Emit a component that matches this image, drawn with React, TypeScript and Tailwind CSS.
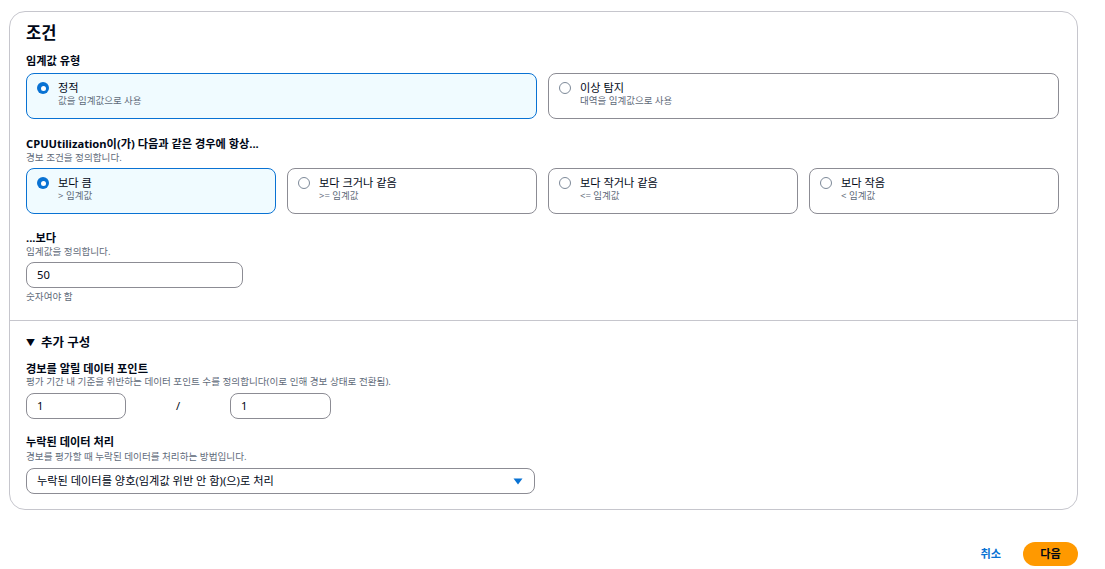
import React from 'react';

const FONT = "font-['Noto_Sans','Noto_Sans_CJK_KR',sans-serif]";

type Opt = { title: string; sub: string };

const Radio: React.FC<{ on: boolean }> = ({ on }) =>
  on ? (
    <span className="mt-[1px] flex h-[12px] w-[12px] shrink-0 items-center justify-center rounded-full bg-[#0972d3]">
      <span className="h-[5px] w-[5px] rounded-full bg-white" />
    </span>
  ) : (
    <span className="mt-[1px] h-[12px] w-[12px] shrink-0 rounded-full border-[1.5px] border-[#7d8998] bg-white" />
  );

const Tile: React.FC<Opt & { on: boolean }> = ({ title, sub, on }) => (
  <div
    className={
      on
        ? 'flex h-[46px] gap-[9px] rounded-lg border border-[#0972d3] bg-[#f0fbff] px-[10px] pt-[7px]'
        : 'flex h-[46px] gap-[9px] rounded-lg border border-[#8c8c94] bg-white px-[10px] pt-[7px]'
    }
  >
    <Radio on={on} />
    <div className="flex flex-col">
      <span className="text-[11.2px] leading-[14px] text-[#000716]">{title}</span>
      <span className="text-[9.5px] leading-[12px] text-[#5f6b7a]">{sub}</span>
    </div>
  </div>
);

const Label: React.FC<{ children: React.ReactNode }> = ({ children }) => (
  <div className="text-[11.2px] font-bold leading-[14px] text-[#000716]">{children}</div>
);

const Desc: React.FC<{ children: React.ReactNode; className?: string }> = ({ children, className = '' }) => (
  <div className={`text-[9.6px] leading-[12px] text-[#5f6b7a] ${className}`}>{children}</div>
);

const Input: React.FC<{ value: string; w: string }> = ({ value, w }) => (
  <div className={`flex h-[26px] items-center rounded-lg border border-[#8c8c94] bg-white px-[10px] text-[11.2px] text-[#000716] ${w}`}>
    {value}
  </div>
);

const types: Opt[] = [
  { title: '정적', sub: '값을 임계값으로 사용' },
  { title: '이상 탐지', sub: '대역을 임계값으로 사용' },
];

const conds: Opt[] = [
  { title: '보다 큼', sub: '> 임계값' },
  { title: '보다 크거나 같음', sub: '>= 임계값' },
  { title: '보다 작거나 같음', sub: '<= 임계값' },
  { title: '보다 작음', sub: '< 임계값' },
];

export default function App() {
  return (
    <div className={`min-h-[569px] w-[1105px] bg-white ${FONT}`}>
      <div className="ml-[9px] pt-[11px]">
        <div className="w-[1069px] rounded-2xl border border-[#c6c6cd] bg-white">
          <div className="pb-[17px] pl-[16px] pr-[18px] pt-[12px]">
            <h2 className="text-[16.5px] font-bold leading-[18px] text-[#000716]">조건</h2>

            <div className="mt-[12px]">
              <Label>임계값 유형</Label>
              <div className="mt-[5px] grid grid-cols-2 gap-[11px]">
                {types.map((o, i) => (
                  <Tile key={o.title} {...o} on={i === 0} />
                ))}
              </div>
            </div>

            <div className="mt-[18px]">
              <Label>CPUUtilization이(가) 다음과 같은 경우에 항상...</Label>
              <Desc className="mt-[1px]">경보 조건을 정의합니다.</Desc>
              <div className="mt-[4px] grid grid-cols-4 gap-[11px]">
                {conds.map((o, i) => (
                  <Tile key={o.title} {...o} on={i === 0} />
                ))}
              </div>
            </div>

            <div className="mt-[17px]">
              <Label>...보다</Label>
              <Desc className="mt-[1px]">임계값을 정의합니다.</Desc>
              <div className="mt-[4px]">
                <Input value="50" w="w-[217px]" />
              </div>
              <Desc className="mt-[3px]">숫자여야 함</Desc>
            </div>
          </div>

          <div className="border-t border-[#c6c6cd] pb-[15px] pl-[16px] pr-[18px] pt-[14px]">
            <div className="flex items-center gap-[6px] text-[12.5px] font-bold leading-[16px] text-[#000716]">
              <span className="text-[9px]">▼</span>
              <span>추가 구성</span>
            </div>

            <div className="mt-[11px]">
              <Label>경보를 알릴 데이터 포인트</Label>
              <Desc>평가 기간 내 기준을 위반하는 데이터 포인트 수를 정의합니다(이로 인해 경보 상태로 전환됨).</Desc>
              <div className="mt-[5px] flex items-center">
                <Input value="1" w="w-[100px]" />
                <span className="w-[104px] text-center text-[11.2px] text-[#000716]">/</span>
                <Input value="1" w="w-[101px]" />
              </div>
            </div>

            <div className="mt-[16px]">
              <Label>누락된 데이터 처리</Label>
              <Desc className="mt-[2px]">경보를 평가할 때 누락된 데이터를 처리하는 방법입니다.</Desc>
              <div className="mt-[5px] flex h-[26px] w-[509px] items-center justify-between rounded-lg border border-[#8c8c94] bg-white pl-[10px] pr-[11px] text-[11.2px] text-[#000716]">
                <span>누락된 데이터를 양호(임계값 위반 안 함)(으)로 처리</span>
                <svg width="10" height="7" viewBox="0 0 10 7">
                  <path d="M0.5 0.5h9L5 6.5z" fill="#0972d3" />
                </svg>
              </div>
            </div>
          </div>
        </div>

        <div className="mt-[32px] flex w-[1069px] items-center justify-end gap-[22px]">
          <button className="text-[11.2px] font-bold text-[#0972d3]">취소</button>
          <button className="h-[24px] w-[55px] rounded-full bg-[#ff9900] text-[11.2px] font-bold text-[#000716]">
            다음
          </button>
        </div>
      </div>
    </div>
  );
}
